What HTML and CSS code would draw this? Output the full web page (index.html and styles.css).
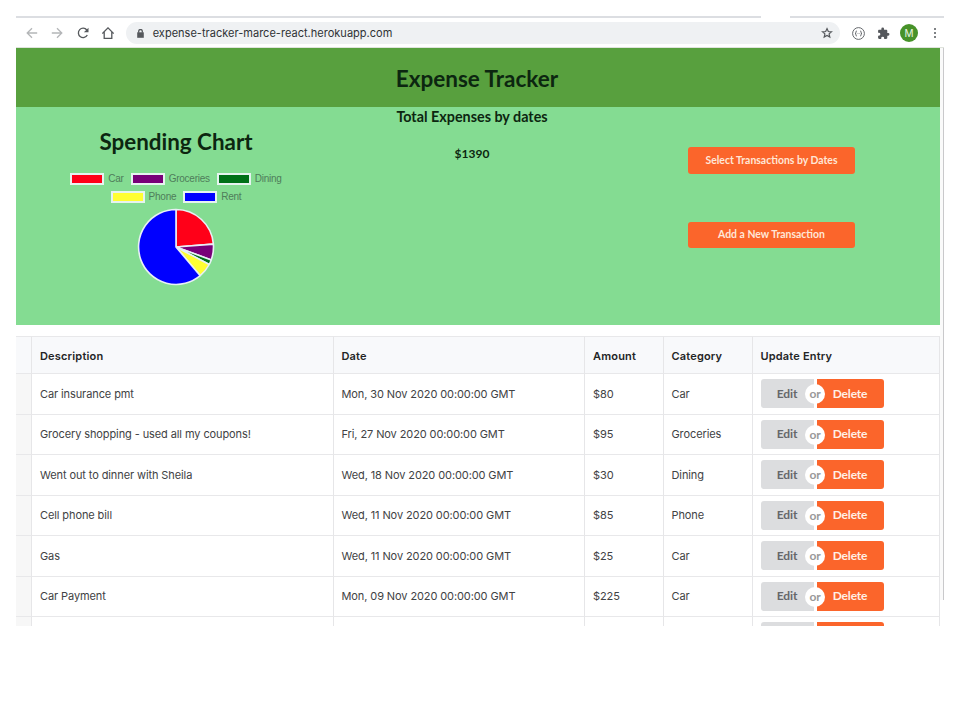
FILE: index.html
```html
<!DOCTYPE html>
<html lang="en">
<head>
<meta charset="utf-8">
<title>Expense Tracker</title>
<link rel="stylesheet" href="styles.css">
</head>
<body>
<div class="window">
  <div class="tabstrip"><i></i><i></i></div>
  <div class="toolbar">
    <svg class="nav" viewBox="0 0 12 12"><path class="dim" d="M11.2 6H1.2M6 1.2 1.2 6 6 10.8"/></svg>
    <svg class="nav" viewBox="0 0 12 12"><path class="dim" d="M.8 6h10M6 1.2 10.800 6 6 10.800"/></svg>
    <svg class="nav" viewBox="0 0 12 12"><path d="M10.300 8A4.700 4.700 0 1 1 9.800 3"/><path class="solid" d="M11.500.7v4.600H6.900z"/></svg>
    <svg class="nav" viewBox="0 0 12 12"><path d="M.3 6.500 6 .9l5.700 5.600M2.200 5v6.400h7.600V5"/></svg>
    <div class="address">
      <svg class="lock" viewBox="0 0 7 9"><path class="solid" d="M.2 3.300h6.600v5.500H.2z"/><path d="M1.700 3.800V2.300a1.800 1.800 0 0 1 3.600 0v1.500"/></svg>
      <span class="url">expense-tracker-marce-react.herokuapp.com</span>
      <svg class="star" viewBox="0 0 12 12"><path d="m6 1.600 1.300 2.900 3.200.3-2.400 2.100.7 3.200L6 8.500l-2.800 1.600.7-3.200L1.500 4.800l3.200-.3z"/></svg>
    </div>
    <svg class="ext" viewBox="0 0 13 13"><circle cx="6.500" cy="6.500" r="5.900"/><path d="M4.800 4Q3.700 4 3.900 5.300T3 6.500q1.100 0 .9 1.200T4.800 9M8.200 4q1.100 0 .9 1.300t.9 1.200q-1.100 0-.9 1.200T8.200 9M5.700 6.500h.5M6.900 6.500h.5"/></svg>
    <svg class="puzzle" viewBox="0 0 24 24"><path d="M20.500 11H19V7c0-1.100-.9-2-2-2h-4V3.500a2.500 2.500 0 0 0-5 0V5H4c-1.100 0-2 .9-2 2v3.800h1.500a2.700 2.700 0 0 1 0 5.400H2V20c0 1.100.9 2 2 2h3.800v-1.500a2.700 2.700 0 0 1 5.400 0V22H17c1.100 0 2-.9 2-2v-4h1.500a2.500 2.500 0 0 0 0-5z"/></svg>
    <span class="avatar">M</span>
    <span class="kebab"><i></i><i></i><i></i></span>
  </div>
  <div class="viewport">
    <div class="page">
      <header><h1>Expense Tracker</h1></header>
      <section class="hero">
        <div class="chart">
          <h2>Spending Chart</h2>
          <div class="legend">
            <span><i class="car"></i>Car</span><span><i class="groceries"></i>Groceries</span><span><i class="dining"></i>Dining</span>
          </div>
          <div class="legend second">
            <span><i class="phone"></i>Phone</span><span><i class="rent"></i>Rent</span>
          </div>
          <svg class="pie" viewBox="-39 -39 78 78">
            <path class="car" d="M0 0V-37.500A37.500 37.500 0 0 1 37.400-2.900z"/>
            <path class="groceries" d="M0 0 37.400-2.900A37.500 37.500 0 0 1 35.200 12.900z"/>
            <path class="dining" d="M0 0 35.200 12.900A37.500 37.500 0 0 1 33.200 17.500z"/>
            <path class="phone" d="M0 0 33.200 17.500A37.500 37.500 0 0 1 24.200 28.700z"/>
            <path class="rent" d="M0 0 24.200 28.700A37.500 37.500 0 1 1 0-37.500z"/>
          </svg>
        </div>
        <div class="total">
          <h3>Total Expenses by dates</h3>
          <p>$1390</p>
        </div>
        <div class="actions">
          <button>Select Transactions by Dates</button>
          <button>Add a New Transaction</button>
        </div>
      </section>
      <table>
        <colgroup><col class="c0"><col class="c1"><col class="c2"><col class="c3"><col class="c4"><col></colgroup>
        <thead><tr><th></th><th>Description</th><th>Date</th><th>Amount</th><th>Category</th><th>Update Entry</th></tr></thead>
        <tbody>
          <tr><td></td><td>Car insurance pmt</td><td>Mon, 30 Nov 2020 00:00:00 GMT</td><td>$80</td><td>Car</td><td><div class="pair"><button>Edit</button><span>or</span><button>Delete</button></div></td></tr>
          <tr><td></td><td>Grocery shopping - used all my coupons!</td><td>Fri, 27 Nov 2020 00:00:00 GMT</td><td>$95</td><td>Groceries</td><td><div class="pair"><button>Edit</button><span>or</span><button>Delete</button></div></td></tr>
          <tr><td></td><td>Went out to dinner with Sheila</td><td>Wed, 18 Nov 2020 00:00:00 GMT</td><td>$30</td><td>Dining</td><td><div class="pair"><button>Edit</button><span>or</span><button>Delete</button></div></td></tr>
          <tr><td></td><td>Cell phone bill</td><td>Wed, 11 Nov 2020 00:00:00 GMT</td><td>$85</td><td>Phone</td><td><div class="pair"><button>Edit</button><span>or</span><button>Delete</button></div></td></tr>
          <tr><td></td><td>Gas</td><td>Wed, 11 Nov 2020 00:00:00 GMT</td><td>$25</td><td>Car</td><td><div class="pair"><button>Edit</button><span>or</span><button>Delete</button></div></td></tr>
          <tr><td></td><td>Car Payment</td><td>Mon, 09 Nov 2020 00:00:00 GMT</td><td>$225</td><td>Car</td><td><div class="pair"><button>Edit</button><span>or</span><button>Delete</button></div></td></tr>
          <tr><td></td><td></td><td></td><td></td><td></td><td><div class="pair"><button></button><button></button></div></td></tr>
        </tbody>
      </table>
    </div>
    <div class="scrollbar"></div>
  </div>
</div>
</body>
</html>
```
FILE: styles.css
```css
* { box-sizing: border-box; }
body { margin: 0; background: #fff; font-family: Inter, "Liberation Sans", sans-serif; }
h1, h2, h3, p { margin: 0; }
.window { margin: 16px; width: 928px; height: 610px; overflow: hidden; }
.tabstrip { display: flex; justify-content: space-between; height: 2px; }
.tabstrip i { background: #dcdee2; width: 745px; }
.tabstrip i + i { width: 154px; }
.toolbar { display: flex; align-items: center; height: 30px; padding-left: 10px; border-bottom: 1px solid #dfe3dc; padding-top: 1px; }
.toolbar svg { fill: none; stroke: #55585c; stroke-width: 1.3; flex: none; }
.toolbar svg .solid { fill: #55585c; stroke: none; }
.toolbar svg .dim { stroke: #b4b6b8; }
.nav { width: 12px; height: 12px; margin-right: 13.300px; }
.address { display: flex; align-items: center; width: 714px; height: 22px; border-radius: 11px; background: #eff1f3; padding: 0 7px 0 11px; margin-left: -1.200px; }
.lock { width: 7px; height: 9px; }
.url { font-size: 11px; letter-spacing: .02px; color: #2e3135; margin-left: 8.700px; flex: 1; white-space: nowrap; }
.address .star { width: 12px; height: 12px; stroke-width: 1.200; }
.toolbar .ext { width: 13px; height: 13px; margin-left: 12px; stroke-width: .9; }
.toolbar .puzzle { width: 13px; height: 13px; margin-left: 12px; fill: #55585c; stroke: none; }
.avatar { width: 18px; height: 18px; border-radius: 9px; background: #479229; color: #e9f5e4; font-size: 10px; line-height: 18px; text-align: center; margin-left: 10px; }
.kebab { display: flex; flex-direction: column; gap: 2px; margin-left: 16px; }
.kebab i { width: 2px; height: 2px; border-radius: 1px; background: #55585c; }
.viewport { display: flex; height: 578px; }
.page { width: 924px; height: 578px; overflow: hidden; }
.scrollbar { width: 4px; height: 552px; border-right: 1px solid #c9c9cb; background: #fafafa; }
header { height: 59px; background: #58a03e; text-align: center; }
h1, h2, h3, .total, button { font-family: Lato, sans-serif; font-weight: 700; color: #0c2610; }
h1 { font-size: 22.500px; line-height: 61px; padding-right: 2px; }
.hero { display: flex; height: 218px; background: #84dc92; }
.chart { width: 320px; padding-top: 21px; display: flex; flex-direction: column; align-items: center; }
h2 { font-size: 22.400px; line-height: 28px; }
.legend { display: flex; gap: 7px; margin-top: 15px; font: 10px/16px "Liberation Sans", sans-serif; letter-spacing: -.25px; color: #4f7d5a; }
.legend span { display: flex; align-items: center; gap: 4px; }
.legend i { width: 34px; height: 12px; border: 2px solid #e6f3f0; }
.second { margin-top: 1.500px; }
.pie { width: 78px; height: 78px; margin: 3.500px 0 0; stroke: #e8f0f5; stroke-width: 1.600; stroke-linejoin: bevel; }
.car { background: #ff0018; fill: #ff0018; }
.groceries { background: #780078; fill: #780078; }
.dining { background: #007018; fill: #007018; }
.phone { background: #ffff32; fill: #ffff32; }
.rent { background: #0000ff; fill: #0000ff; }
.total { width: 272px; text-align: center; }
h3 { font-size: 14.350px; line-height: 20px; }
.total p { font-size: 12px; line-height: 16px; margin-top: 19px; }
.actions { display: flex; flex-direction: column; gap: 48px; margin: 40px 0 0 80px; }
button { border: 0; padding: 0; background: #fb652b; color: #ffe7d8; border-radius: 3px; font-size: 10.450px; }
.actions button { width: 167px; height: 26.500px; padding-bottom: 1px; }
table { margin-top: 11px; width: 924px; table-layout: fixed; border-collapse: separate; border-spacing: 0; font-size: 11px; letter-spacing: -.1px; color: #414244; }
.c0 { width: 16px; } .c1 { width: 301.500px; } .c2 { width: 251.500px; } .c3 { width: 78.500px; } .c4 { width: 89px; }
th, td { padding: 0 0 0 8px; text-align: left; border-right: 1px solid #e6e6e8; border-bottom: 1px solid #e8e8ea; white-space: nowrap; }
th { height: 38px; padding-top: 1px; background: #f8f9fb; border-top: 1px solid #e8e8ea; color: #242526; font-weight: 600; letter-spacing: .18px; }
td { height: 40.500px; }
td:first-child { background: #f7f7f7; }
.pair { position: relative; display: flex; gap: 3px; width: 123px; }
.pair button { width: 53px; height: 29px; padding-bottom: 1px; background: #dcdddf; color: #66676a; border-radius: 3px 0 0 3px; font-size: 12px; letter-spacing: -.15px; }
.pair button:last-child { width: 67px; background: #fb652b; color: #fff0e6; border-radius: 0 3px 3px 0; }
.pair span { position: absolute; left: 44.500px; top: 5px; width: 20px; height: 20px; border-radius: 10px; background: #fff; color: #999; font: 700 12px/20px Lato, sans-serif; text-align: center; }
```
